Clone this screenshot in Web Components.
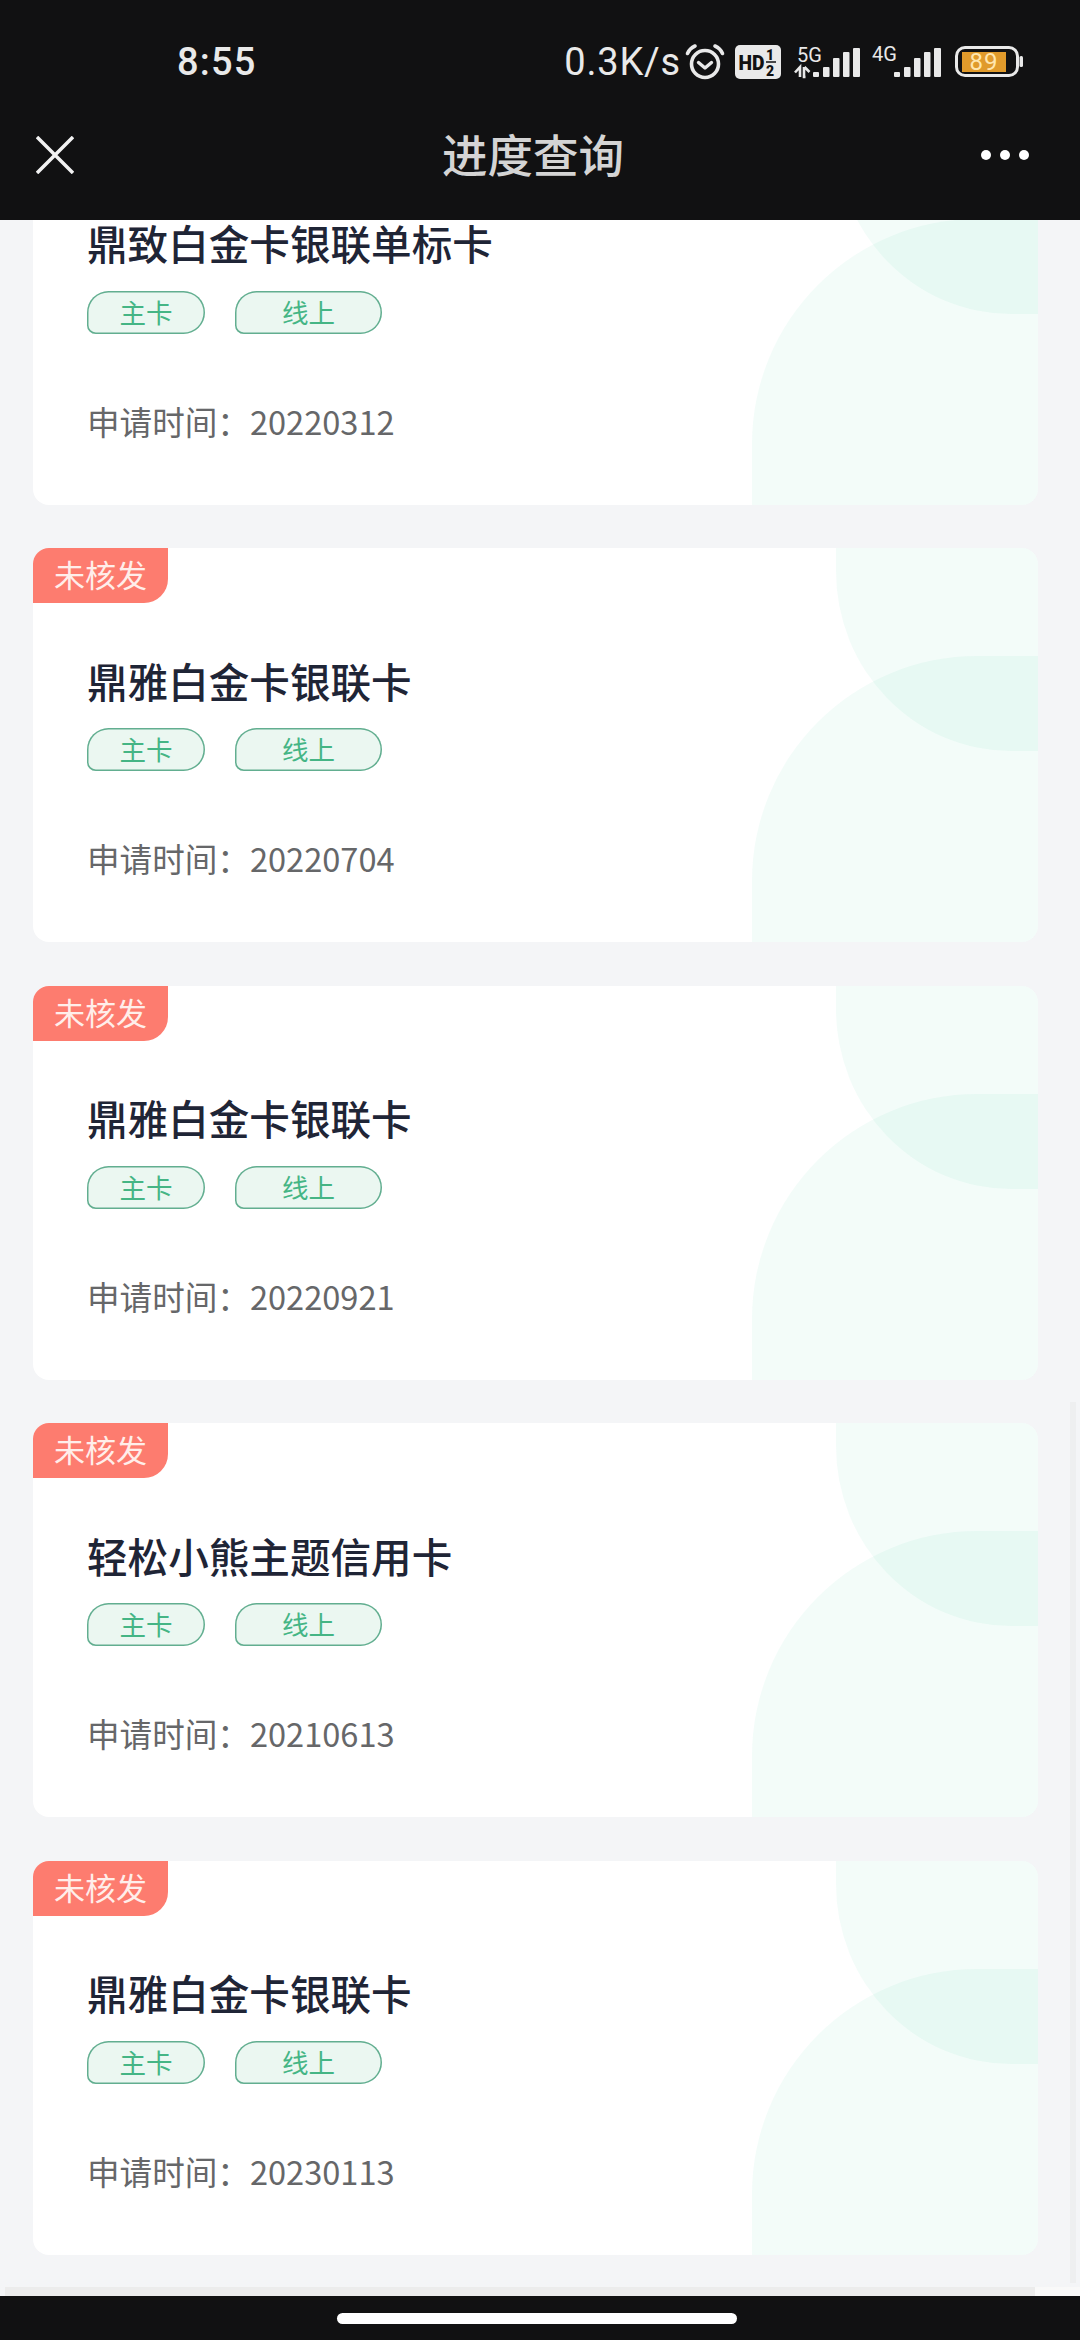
<!DOCTYPE html>
<html lang="zh">
<head>
<meta charset="utf-8">
<title>进度查询</title>
<style>
  html, body { margin: 0; width: 1080px; height: 2340px; overflow: hidden; background: #f4f5f7; }
  body { font-family: "Noto Sans CJK SC", "Noto Sans", sans-serif; }
  app-shell { height: 2340px; }
</style>
</head>
<body>
<app-shell>
  <status-bar slot="top"></status-bar>
  <nav-bar slot="top">进度查询</nav-bar>

  <apply-card>
    <span slot="title">鼎致白金卡银联单标卡</span>
    <span slot="date">20220312</span>
  </apply-card>
  <apply-card status="未核发">
    <span slot="title">鼎雅白金卡银联卡</span>
    <span slot="date">20220704</span>
  </apply-card>
  <apply-card status="未核发">
    <span slot="title">鼎雅白金卡银联卡</span>
    <span slot="date">20220921</span>
  </apply-card>
  <apply-card status="未核发">
    <span slot="title">轻松小熊主题信用卡</span>
    <span slot="date">20210613</span>
  </apply-card>
  <apply-card status="未核发">
    <span slot="title">鼎雅白金卡银联卡</span>
    <span slot="date">20230113</span>
  </apply-card>
</app-shell>

<script>
class AppShell extends HTMLElement {
  constructor() {
    super();
    this.attachShadow({mode: 'open'});
    this.shadowRoot.innerHTML = `
<style>
  :host { display: flex; flex-direction: column; width: 1080px; background: #f4f5f7; }
  header { flex: none; background: #111112; }
  .scroll { flex: 1; min-height: 0; overflow: hidden; position: relative; }
  .list { display: flex; flex-direction: column; gap: 43.5px; margin-top: -109.5px; padding: 0 42px 0 33px; }
  /* top edge of the next card, peeking in above the home bar */
  .next { flex: none; height: 9px; width: 1030px; margin: -11.5px 0 0 -28px; background: #ececec; }
  .tail { position: absolute; left: 1035px; right: 0; bottom: 0; height: 9px; background: #f9f9f9; }
  .thumb { position: absolute; top: 1182px; right: 4px; width: 6px; height: 881px; background: #eeeff0; }
  footer { flex: none; height: 44px; background: #111112; display: flex; justify-content: center; padding: 17px 6px 0 0; box-sizing: border-box; }
  footer div { width: 400px; height: 11px; border-radius: 6px; background: #fff; }
</style>
<header><slot name="top"></slot></header>
<div class="scroll">
  <div class="list"><slot></slot><div class="next"></div></div>
  <div class="thumb"></div>
  <div class="tail"></div>
</div>
<footer><div></div></footer>
`;
  }
}
customElements.define('app-shell', AppShell);

class StatusBar extends HTMLElement {
  constructor() {
    super();
    this.attachShadow({mode: 'open'});
    this.shadowRoot.innerHTML = `
<style>
  :host { display: flex; align-items: center; height: 107px; padding-top: 17px; box-sizing: border-box; color: #e9e9e9; font-family: Roboto, "Noto Sans", sans-serif; }
  .time { margin-left: 177px; font-size: 38px; font-weight: 500; line-height: 44px; letter-spacing: 1.200px; }
  .right { margin-left: auto; margin-right: 57px; display: flex; align-items: center; }
  .speed { font-size: 38px; line-height: 44px; letter-spacing: .8px; }
  svg { display: block; flex: none; }
  svg text { font-family: Roboto, "Liberation Sans", sans-serif; }
</style>
<div class="time">8:55</div>
<div class="right">
  <div class="speed">0.3K/s</div>
  <svg style="margin-left:4px" width="40" height="38" viewBox="0 0 40 38" fill="none" stroke="#e9e9e9">
    <circle cx="20" cy="21" r="13.5" stroke-width="3.6"/>
    <path d="M13.5 19.5l6.5 5.5 6.500-5.500" stroke-width="3.4" stroke-linecap="round" stroke-linejoin="round"/>
    <path d="M2.500 10.500C4 7 6.500 4.500 10 3M37.500 10.500C36 7 33.500 4.500 30 3" stroke-width="3.600" stroke-linecap="round"/>
  </svg>
  <svg style="margin-left:10px" width="46" height="34" viewBox="0 0 46 34">
    <rect width="46" height="34" rx="5" fill="#e9e9e9"/>
    <text x="3.500" y="25" font-size="20" font-weight="900" fill="#111112" textLength="26" lengthAdjust="spacingAndGlyphs">HD</text>
    <text x="31" y="15" font-size="14" font-weight="900" fill="#111112">1</text>
    <text x="31" y="31" font-size="14" font-weight="900" fill="#111112">2</text>
    <path d="M31 17h10" stroke="#111112" stroke-width="1.500"/>
  </svg>
  <svg style="margin-left:12px" width="68" height="44" viewBox="0 -5 68 44" fill="#e9e9e9">
    <text x="4" y="17" font-size="20">5G</text>
    <path d="M7 32v-10l-5 5.500M11 22v10h1.500M11.500 22l5 5" fill="none" stroke="#e9e9e9" stroke-width="2.600"/>
    <rect x="20" y="27" width="6" height="5" rx="1"/>
    <rect x="30" y="22" width="6.500" height="10" rx="1"/>
    <rect x="40" y="13" width="6.500" height="19" rx="1"/>
    <rect x="50" y="7" width="6.500" height="25" rx="1"/>
    <rect x="60" y="3" width="7" height="29" rx="1"/>
  </svg>
  <svg style="margin-left:11px" width="70" height="44" viewBox="0 -5 70 44" fill="#e9e9e9">
    <text x="0" y="16" font-size="20">4G</text>
    <rect x="22" y="27" width="6" height="5" rx="1"/>
    <rect x="32" y="22" width="6.500" height="10" rx="1"/>
    <rect x="42" y="13" width="6.500" height="19" rx="1"/>
    <rect x="52" y="7" width="6.500" height="25" rx="1"/>
    <rect x="62" y="3" width="7" height="29" rx="1"/>
  </svg>
  <svg style="margin-left:13px" width="68" height="32" viewBox="0 0 68 32">
    <rect x="1.500" y="1.500" width="61" height="28" rx="8.500" fill="none" stroke="#e9e9e9" stroke-width="3"/>
    <rect x="7" y="6" width="44" height="20" fill="#e09a2b"/>
    <text x="29" y="24" text-anchor="middle" font-size="24" letter-spacing="1" fill="#ffe6ae">89</text>
    <rect x="64.500" y="10" width="3.500" height="11" rx="1.500" fill="#e9e9e9"/>
  </svg>
</div>
`;
  }
}
customElements.define('status-bar', StatusBar);

class NavBar extends HTMLElement {
  constructor() {
    super();
    this.attachShadow({mode: 'open'});
    this.shadowRoot.innerHTML = `
<style>
  :host { display: flex; align-items: center; justify-content: space-between; height: 113px; padding: 0 51px 17px 36px; box-sizing: border-box; }
  .title { font-size: 45.500px; line-height: 60px; font-weight: 500; color: #d4d4d4; white-space: nowrap; margin: 0 0 5px 11px; }
  svg { display: block; }
</style>
<svg width="38" height="38" viewBox="0 0 38 38" fill="none" stroke="#f2f2f2" stroke-width="3.500">
  <path d="M1 1l36 36M37 1L1 37"/>
</svg>
<div class="title"><slot></slot></div>
<svg width="48" height="10" viewBox="0 0 48 10" fill="#fff">
  <circle cx="5" cy="5" r="5"/><circle cx="24" cy="5" r="5"/><circle cx="43" cy="5" r="5"/>
</svg>
`;
  }
}
customElements.define('nav-bar', NavBar);

class CardTag extends HTMLElement {
  constructor() {
    super();
    this.attachShadow({mode: 'open'});
    this.shadowRoot.innerHTML = `
<style>
  :host { display: flex; align-items: center; justify-content: center; height: 43px; box-sizing: border-box; box-shadow: inset 0 0 0 1.500px #62ae90; border-radius: 22px 22px 22px 9px; background: #ebf7f1; color: #45b585; font-size: 26.500px; line-height: 1; }
</style>
<slot></slot>
`;
  }
}
customElements.define('card-tag', CardTag);

class ApplyCard extends HTMLElement {
  constructor() {
    super();
    this.attachShadow({mode: 'open'});
    const status = this.getAttribute('status');
    this.shadowRoot.innerHTML = `
<style>
  :host { display: block; position: relative; flex: none; height: 394px; box-sizing: border-box; padding: 104.500px 0 0 54px; background: #fff; border-radius: 16px; overflow: hidden; }
  .bg { position: absolute; background: rgba(40, 205, 140, .055); }
  .bg1 { left: 803px; right: 0; top: 0; height: 203px; border-bottom-left-radius: 175px 180px; }
  .bg2 { left: 719px; right: 0; top: 108px; bottom: 0; border-top-left-radius: 225px; }
  .badge { position: absolute; left: 0; top: 0; width: 135px; height: 55px; background: #fd7c6f; color: #ffeeea; border-radius: 0 0 24px 0; font-size: 31px; line-height: 52px; text-align: center; }
  .title { position: relative; font-size: 40.600px; line-height: 56px; font-weight: 500; color: #1f2536; white-space: nowrap; }
  .tags { position: relative; display: flex; gap: 30px; margin: 19.500px 0 0 0; }
  card-tag.a { width: 118px; }
  card-tag.b { width: 147px; }
  .date { position: relative; margin-top: 65px; font-size: 32.600px; line-height: 44px; color: #666769; white-space: nowrap; }
</style>
<div class="bg bg1"></div>
<div class="bg bg2"></div>
${status ? `<div class="badge">${status}</div>` : ''}
<div class="title"><slot name="title"></slot></div>
<div class="tags"><card-tag class="a">主卡</card-tag><card-tag class="b">线上</card-tag></div>
<div class="date">申请时间：<slot name="date"></slot></div>
`;
  }
}
customElements.define('apply-card', ApplyCard);
</script>
</body>
</html>
